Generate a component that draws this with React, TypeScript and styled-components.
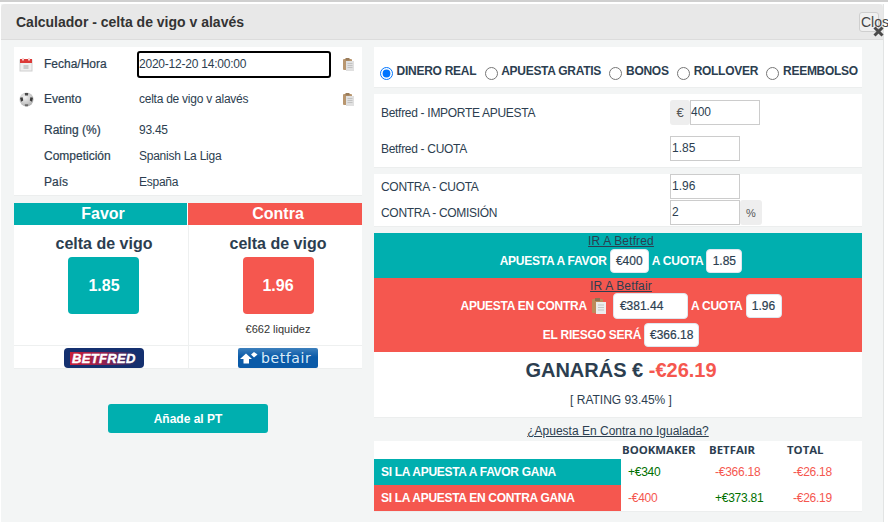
import React from "react";
import styled, { createGlobalStyle } from "styled-components";

const Global = createGlobalStyle`
  html, body { margin: 0; padding: 0; background: #fff; overflow: hidden; }
  body { font-family: "Liberation Sans", Arial, sans-serif; font-size: 12px; color: #2c3e50; }
  * { box-sizing: border-box; }
`;

const teal = "#00afaf";
const red = "#f5574f";

const Page = styled.div`
  width: 888px;
  height: 522px;
  border-top: 2px solid #cfcfcf;
  padding: 2px 4px 0 1px;
  overflow: hidden;
`;
const Modal = styled.div`
  position: relative;
  height: 520px;
  background: #f3f5f5;
  border-right: 1px solid #e2e4e4;
`;
const Header = styled.header`
  height: 36px;
  background: #e8e8e8;
  border-bottom: 1px solid #dcdcdc;
  border-radius: 4px 4px 0 0;
  padding: 0 0 0 15px;
  display: flex;
  align-items: center;
  justify-content: space-between;
`;
const Title = styled.h4`
  margin: 0;
  font-size: 14px;
  font-weight: 700;
  color: #333;
`;
const CloseButton = styled.button`
  width: 20px;
  height: 20px;
  padding: 0 0 0 1px;
  margin: 0 4px 0 0;
  background: #f0f0f0;
  border: 1px solid #cfcfcf;
  border-radius: 3px;
  font: 14px "Liberation Sans", Arial, sans-serif;
  color: #444;
  text-align: left;
  white-space: nowrap;
  overflow: visible;
`;
const CloseMark = styled.svg`
  position: absolute;
  left: 872px;
  top: 22px;
  width: 11px;
  height: 11px;
`;
const Body = styled.div`
  display: grid;
  grid-template-columns: 348px 488px;
  column-gap: 12px;
  padding: 7px 0 0 13px;
`;
const Column = styled.div`
  display: flex;
  flex-direction: column;
`;
const Panel = styled.section<{ $h: number; $mb?: number }>`
  background: #fff;
  height: ${(p) => p.$h}px;
  margin-bottom: ${(p) => p.$mb ?? 7}px;
  flex: none;
  box-shadow: 0 1px 0 #eceeee;
`;
const InfoGrid = styled(Panel)`
  display: grid;
  grid-template-columns: 30px 95px 204px 1fr;
  grid-template-rows: 34px 36px 26px 26px 26px;
  align-items: center;
`;
const IconCell = styled.div`
  display: flex;
  padding-left: 5px;
`;
const InfoLabel = styled.div<{ $col?: boolean }>`
  grid-column: ${(p) => (p.$col ? "2" : "auto")};
  color: #2c3e50;
  -webkit-text-stroke: 0.2px #2c3e50;
`;
const InfoValue = styled.div`
  color: #2c3e50;
  letter-spacing: -0.25px;
`;
const DateInput = styled.input`
  width: 194px;
  height: 27px;
  margin: 1px 0 0 -2px;
  padding: 0 0 1px 0;
  border: 2px solid #000;
  border-radius: 3px;
  outline: none;
  font: 12px "Liberation Sans", Arial, sans-serif;
  letter-spacing: -0.22px;
  color: #2c3e50;
  background: #fff;
`;
const CopyCell = styled.div`
  display: flex;
`;
const Versus = styled.div`
  display: grid;
  grid-template-columns: 174px 174px;
  grid-template-rows: 22px 120px 23px;
  height: 165px;
  background: #fff;
  box-shadow: 0 1px 0 #eceeee;
`;
const VersusHead = styled.div<{ $c: string }>`
  background: ${(p) => p.$c};
  color: #fff;
  font-size: 16px;
  font-weight: 700;
  text-align: center;
  line-height: 22px;
  padding-left: 6px;
  &:nth-child(1) { margin-right: 1px; padding-left: 5px; }
`;
const OddsBox = styled.div<{ $c: string }>`
  width: 71px;
  height: 57px;
  margin-top: 4px;
  background: ${(p) => p.$c};
  border-radius: 4px;
  color: #fff;
  font-size: 16px;
  font-weight: 700;
  display: flex;
  align-items: center;
  justify-content: center;
`;
const VersusCell = styled.div`
  display: flex;
  flex-direction: column;
  align-items: center;
  border-left: 1px solid #eef0f0;
  padding: 10px 0 0 5px;
  &:nth-child(3) { border-left: 0; padding-left: 6px; }
  &:nth-child(3) ${OddsBox} { margin-left: -1px; padding-left: 1px; }
`;
const TeamName = styled.div`
  font-size: 16px;
  font-weight: 700;
  line-height: 18px;
  color: #2c3e50;
`;
const Liquidity = styled.div`
  margin-top: 9px;
  font-size: 11px;
  color: #333;
`;
const LogoCell = styled.div`
  display: flex;
  justify-content: center;
  border-top: 1px solid #eef0f0;
  border-left: 1px solid #eef0f0;
  padding: 2px 0 0 5px;
  &:nth-child(5) { border-left: 0; padding-left: 6px; }
`;
const BetfredLogo = styled.div`
  width: 80px;
  height: 20px;
  background: #14306f;
  border-radius: 4px;
  display: flex;
  align-items: center;
  padding-left: 6px;
`;
const BetfredText = styled.span`
  font: italic 700 13px/13px "Liberation Sans", Arial, sans-serif;
  color: #fff;
  letter-spacing: 0.35px;
  padding: 0 3px 0 2px;
  -webkit-text-stroke: 0.4px #fff;
  background: linear-gradient(90deg, #c8213a 0%, #8f2150 50%, #14306f 95%);
`;
const BetfairLogo = styled.div`
  width: 80px;
  height: 20px;
  background: linear-gradient(#3d80bd, #0a5aa8 45%);
  border-radius: 2px;
  display: flex;
  align-items: center;
  gap: 3px;
  padding-left: 2px;
`;
const BetfairText = styled.span`
  font: 400 14px/18px "DejaVu Sans", sans-serif;
  color: #dcecf8;
  letter-spacing: 0.6px;
`;
const AddButton = styled.button`
  display: block;
  width: 160px;
  height: 29px;
  margin: 36px 0 0 94px;
  border: 0;
  border-radius: 3px;
  background: ${teal};
  color: #fff;
  font: 700 12px "Liberation Sans", Arial, sans-serif;
`;
const RadioPanel = styled(Panel)`
  display: flex;
  align-items: flex-start;
  gap: 8.4px;
  padding: 17px 0 0 6px;
`;
const RadioItem = styled.label`
  display: flex;
  align-items: flex-start;
  gap: 3.6px;
  font-size: 12px;
  font-weight: 700;
  letter-spacing: -0.28px;
  color: #2c3e50;
  line-height: 14px;
  white-space: nowrap;
`;
const Radio = styled.input`
  width: 13px;
  height: 13px;
  margin: 3px 0 0 0;
`;
const FormPanel = styled(Panel)<{ $pt: number; $gap: number }>`
  display: grid;
  grid-template-columns: 289px 1fr;
  grid-auto-rows: 25px;
  align-items: center;
  align-content: start;
  row-gap: ${(p) => p.$gap}px;
  padding: ${(p) => p.$pt}px 0 0 7px;
`;
const FormLabel = styled.div`
  font-size: 12px;
  letter-spacing: -0.3px;
  color: #2c3e50;
`;
const Group = styled.div`
  display: flex;
`;
const Addon = styled.span<{ $w: number }>`
  width: ${(p) => p.$w}px;
  height: 25px;
  background: #eee;
  border-radius: 3px;
  color: #555;
  display: flex;
  align-items: center;
  justify-content: center;
  font-size: 11px;
`;
const Euro = styled(Addon)`
  font-size: 13px;
`;
const Field = styled.input<{ $tight?: boolean }>`
  width: 70px;
  height: 25px;
  padding: 0 0 2px ${(p) => (p.$tight ? 0 : 1)}px;
  border: 1px solid #ccc;
  background: #fff;
  outline: none;
  font: 12px "Liberation Sans", Arial, sans-serif;
  color: #2c3e50;
  display: block;
`;
const Band = styled.div<{ $c: string; $h: number }>`
  flex: none;
  height: ${(p) => p.$h}px;
  background: ${(p) => p.$c};
  text-align: center;
  padding-left: 6px;
`;
const BandLink = styled.a`
  display: block;
  height: 15px;
  color: #2c3e50;
  text-decoration: underline;
  font-size: 12px;
  letter-spacing: 0.15px;
  line-height: 17px;
`;
const BandRow = styled.div<{ $mt?: number }>`
  display: flex;
  justify-content: center;
  align-items: center;
  gap: 3px;
  margin-top: ${(p) => p.$mt ?? 0}px;
  color: #fff;
  font-weight: 700;
  font-size: 12px;
  letter-spacing: -0.25px;
`;
const Pill = styled.span<{ $w: number }>`
  width: ${(p) => p.$w}px;
  height: 24px;
  background: #fff;
  border: 1px solid #dfe6ee;
  border-radius: 4px;
  color: #2c3e50;
  font-weight: 400;
  letter-spacing: 0;
  display: flex;
  align-items: center;
  justify-content: center;
  -webkit-text-stroke: 0.2px #2c3e50;
`;
const PillInput = styled(Pill)`
  height: 26px;
  justify-content: flex-start;
  padding-left: 6px;
  margin-left: 4px;
  font-size: 12px;
`;
const IconGap = styled.span`
  display: flex;
  margin-left: 2px;
`;
const Result = styled(Panel)`
  text-align: center;
  padding: 6px 0 0 6px;
`;
const Gain = styled.div`
  font-size: 20px;
  font-weight: 700;
  line-height: 24px;
  color: #2c3e50;
`;
const GainValue = styled.span`
  color: ${red};
`;
const RatingNote = styled.div`
  margin-top: 11px;
  font-size: 12px;
  color: #2c3e50;
`;
const Unmatched = styled.a`
  display: block;
  text-align: center;
  text-decoration: underline;
  color: #2c3e50;
  font-size: 12px;
  line-height: 14px;
`;
const Outcome = styled.div`
  display: grid;
  grid-template-columns: 247px 87px 78px 76px;
  grid-template-rows: 18px 26px 26px;
  background: #fff;
  margin-top: 3px;
  height: 70px;
  box-shadow: 0 1px 0 #eceeee;
`;
const HeadCell = styled.div`
  font: 700 11.4px/18px "Open Sans", sans-serif;
  color: #2c3e50;
  padding-left: 1px;
`;
const RowLabel = styled.div<{ $c: string }>`
  background: ${(p) => p.$c};
  color: #fff;
  font-size: 12px;
  font-weight: 700;
  letter-spacing: -0.3px;
  padding-left: 7px;
  display: flex;
  align-items: center;
`;
const Amount = styled.div<{ $pos?: boolean }>`
  color: ${(p) => (p.$pos ? "#007000" : red)};
  font-size: 12px;
  letter-spacing: -0.25px;
  padding-left: 7px;
  display: flex;
  align-items: center;
`;

const Calendar = () => (
  <svg width="14" height="15" viewBox="0 0 14 15">
    <rect x="1" y="3" width="12" height="11" fill="#efefef" stroke="#cfcfcf" />
    <rect x="1" y="2" width="12" height="4" fill="#dc3a38" />
    <rect x="3" y="1" width="2" height="2.5" fill="#f6d0d0" />
    <rect x="9" y="1" width="2" height="2.5" fill="#f6d0d0" />
    <rect x="4.5" y="8" width="5" height="4" fill="#cbcbcb" />
  </svg>
);
const Ball = () => (
  <svg width="15" height="15" viewBox="0 0 15 15">
    <defs>
      <radialGradient id="ballShade" cx="0.4" cy="0.35" r="0.75">
        <stop offset="0" stopColor="#f4f4f4" />
        <stop offset="1" stopColor="#a9a9a9" />
      </radialGradient>
    </defs>
    <circle cx="7.5" cy="7.5" r="7" fill="url(#ballShade)" />
    <path d="M5.8 1 9.2 1 9 3.6 6 3.6Z" fill="#4a4a4a" />
    <path d="M1 5.8 3.6 5.2 4.2 8.6 2 9.8Z" fill="#3a3a3a" />
    <path d="M14 5.8 11.4 5.2 10.8 8.6 13 9.8Z" fill="#3a3a3a" />
    <path d="M5.8 12.2 9.2 12.2 9 14.2 6 14.2Z" fill="#6a6a6a" />
  </svg>
);
const Clipboard = () => (
  <svg width="11" height="13" viewBox="0 0 11 13">
    <rect x="0" y="1" width="9" height="11" rx="1" fill="#b8966f" />
    <rect x="2.5" y="0" width="4" height="2.5" fill="#9a7c5a" />
    <rect x="3" y="3" width="8" height="10" fill="#e0e0e0" />
    <path d="M4.5 5.5h5M4.5 7.5h5M4.5 9.5h5" stroke="#c2c2c2" />
  </svg>
);
const BigClipboard = () => (
  <svg width="14" height="16" viewBox="0 0 14 16">
    <rect x="0" y="1" width="11" height="14" rx="1" fill="#bb8a5a" />
    <rect x="3" y="0" width="5" height="3" fill="#8f7152" />
    <rect x="4" y="4" width="10" height="12" fill="#ececec" />
    <path d="M6 7h6M6 9.5h6M6 12h6" stroke="#c4c4c4" />
  </svg>
);

const radios = ["DINERO REAL", "APUESTA GRATIS", "BONOS", "ROLLOVER", "REEMBOLSO"];

export default function App() {
  return (
    <>
      <Global />
      <Page>
        <Modal>
          <Header>
            <Title>Calculador - celta de vigo v alavés</Title>
            <CloseButton type="button">Close</CloseButton>
          </Header>
          <CloseMark viewBox="0 0 11 11">
            <path d="M1.5 1.5 9.5 9.5M9.5 1.5 1.5 9.5" stroke="#4a4a4a" strokeWidth="3" />
          </CloseMark>
          <Body>
            <Column>
              <InfoGrid as="section" $h={148} $mb={8}>
                <IconCell><Calendar /></IconCell>
                <InfoLabel>Fecha/Hora</InfoLabel>
                <DateInput readOnly value="2020-12-20 14:00:00" />
                <CopyCell><Clipboard /></CopyCell>
                <IconCell><Ball /></IconCell>
                <InfoLabel>Evento</InfoLabel>
                <InfoValue>celta de vigo v alavés</InfoValue>
                <CopyCell><Clipboard /></CopyCell>
                <InfoLabel $col>Rating (%)</InfoLabel>
                <InfoValue>93.45</InfoValue>
                <span />
                <InfoLabel $col>Competición</InfoLabel>
                <InfoValue>Spanish La Liga</InfoValue>
                <span />
                <InfoLabel $col>País</InfoLabel>
                <InfoValue>España</InfoValue>
              </InfoGrid>
              <Versus>
                <VersusHead $c={teal}>Favor</VersusHead>
                <VersusHead $c={red}>Contra</VersusHead>
                <VersusCell>
                  <TeamName>celta de vigo</TeamName>
                  <OddsBox $c={teal}>1.85</OddsBox>
                </VersusCell>
                <VersusCell>
                  <TeamName>celta de vigo</TeamName>
                  <OddsBox $c={red}>1.96</OddsBox>
                  <Liquidity>€662 liquidez</Liquidity>
                </VersusCell>
                <LogoCell>
                  <BetfredLogo><BetfredText>BETFRED</BetfredText></BetfredLogo>
                </LogoCell>
                <LogoCell>
                  <BetfairLogo>
                    <svg width="18" height="12" viewBox="0 0 18 12">
                      <path d="M6 1.5 12 7H9V11.5H3.5V7H0Z" fill="#fff" />
                      <path d="M11 2.5 14 0 17.5 2.5 14 5.5Z" fill="#fff" />
                    </svg>
                    <BetfairText>betfair</BetfairText>
                  </BetfairLogo>
                </LogoCell>
              </Versus>
              <AddButton type="button">Añade al PT</AddButton>
            </Column>
            <Column>
              <RadioPanel $h={40}>
                {radios.map((r, i) => (
                  <RadioItem key={r}>
                    <Radio type="radio" name="mode" defaultChecked={i === 0} />
                    {r}
                  </RadioItem>
                ))}
              </RadioPanel>
              <FormPanel $h={73} $pt={6} $gap={11}>
                <FormLabel>Betfred - IMPORTE APUESTA</FormLabel>
                <Group>
                  <Euro $w={20}>€</Euro>
                  <Field $tight readOnly value="400" />
                </Group>
                <FormLabel>Betfred - CUOTA</FormLabel>
                <Group>
                  <Field readOnly value="1.85" />
                </Group>
              </FormPanel>
              <FormPanel $h={52} $pt={0} $gap={1}>
                <FormLabel>CONTRA - CUOTA</FormLabel>
                <Group>
                  <Field readOnly value="1.96" />
                </Group>
                <FormLabel>CONTRA - COMISIÓN</FormLabel>
                <Group>
                  <Field readOnly value="2" />
                  <Addon $w={22}>%</Addon>
                </Group>
              </FormPanel>
              <Band $c={teal} $h={45}>
                <BandLink>IR A Betfred</BandLink>
                <BandRow $mt={1}>
                  APUESTA A FAVOR <Pill $w={39}>€400</Pill> A CUOTA <Pill $w={36}>1.85</Pill>
                </BandRow>
              </Band>
              <Band $c={red} $h={74}>
                <BandLink>IR A Betfair</BandLink>
                <BandRow>
                  APUESTA EN CONTRA <IconGap><BigClipboard /></IconGap> <PillInput $w={75}>€381.44</PillInput> A CUOTA <Pill $w={36}>1.96</Pill>
                </BandRow>
                <BandRow $mt={4}>
                  EL RIESGO SERÁ <Pill $w={55}>€366.18</Pill>
                </BandRow>
              </Band>
              <Result $h={65} $mb={7}>
                <Gain>GANARÁS € <GainValue>-€26.19</GainValue></Gain>
                <RatingNote>[ RATING 93.45% ]</RatingNote>
              </Result>
              <Unmatched>¿Apuesta En Contra no Igualada?</Unmatched>
              <Outcome>
                <span />
                <HeadCell>BOOKMAKER</HeadCell>
                <HeadCell>BETFAIR</HeadCell>
                <HeadCell>TOTAL</HeadCell>
                <RowLabel $c={teal}>SI LA APUESTA A FAVOR GANA</RowLabel>
                <Amount $pos>+€340</Amount>
                <Amount>-€366.18</Amount>
                <Amount>-€26.18</Amount>
                <RowLabel $c={red}>SI LA APUESTA EN CONTRA GANA</RowLabel>
                <Amount>-€400</Amount>
                <Amount $pos>+€373.81</Amount>
                <Amount>-€26.19</Amount>
              </Outcome>
            </Column>
          </Body>
        </Modal>
      </Page>
    </>
  );
}
